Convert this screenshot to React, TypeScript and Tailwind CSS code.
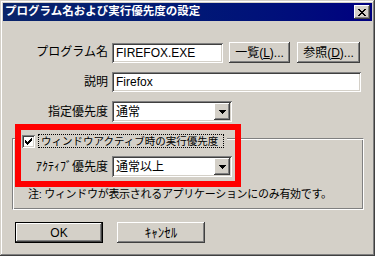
import React from "react";

const raised =
  "shadow-[inset_-1px_-1px_#404040,inset_1px_1px_#ffffff,inset_-2px_-2px_#808080,inset_2px_2px_#d4d0c8]";
const sunken =
  "shadow-[inset_1px_1px_#808080,inset_-1px_-1px_#ffffff,inset_2px_2px_#404040,inset_-2px_-2px_#d4d0c8]";

function Arrow() {
  return (
    <svg width="7" height="4" viewBox="0 0 7 4" shapeRendering="crispEdges">
      <path d="M0 0h7v1H0zM1 1h5v1H1zM2 2h3v1H2zM3 3h1v1H3z" fill="#000" />
    </svg>
  );
}

function Combo({ text }: { text: string }) {
  return (
    <div className={`flex h-[21px] w-[120px] items-center bg-white p-[2px] ${sunken}`}>
      <span className="flex-1 pl-[2px] text-[12px] leading-none text-black">{text}</span>
      <span className={`flex h-[17px] w-[16px] items-center justify-center bg-[#d4d0c8] ${raised}`}>
        <Arrow />
      </span>
    </div>
  );
}

function Edit({ text, w }: { text: string; w: string }) {
  return (
    <div className={`flex h-[20px] items-center bg-white pl-[4px] text-[12px] leading-none text-black ${w} ${sunken}`}>
      {text}
    </div>
  );
}

export default function App() {
  return (
    <div className="font-['Liberation_Sans','Noto_Sans_CJK_JP',sans-serif] text-black">
      <div className="relative h-[256px] w-[375px] bg-[#d4d0c8] p-[3px] shadow-[inset_-1px_-1px_#404040,inset_1px_1px_#d4d0c8,inset_-2px_-2px_#808080,inset_2px_2px_#ffffff]">
        {/* Title bar */}
        <div className="flex h-[18px] items-center justify-between bg-linear-to-r from-[#0a246a] to-[#000080] pl-[2px] pr-[2px]">
          <span className="whitespace-nowrap text-[11.5px] font-bold leading-none text-white">
            プログラム名および実行優先度の設定
          </span>
          <div className={`flex h-[14px] w-[16px] items-center justify-center bg-[#d4d0c8] ${raised}`}>
            <svg width="8" height="7" viewBox="0 0 8 7" shapeRendering="crispEdges">
              <path
                d="M0 0h2v1H0zM6 0h2v1H6zM1 1h2v1H1zM5 1h2v1H5zM2 2h4v1H2zM3 3h2v1H3zM2 4h4v1H2zM1 5h2v1H1zM5 5h2v1H5zM0 6h2v1H0zM6 6h2v1H6z"
                fill="#000"
              />
            </svg>
          </div>
        </div>

        {/* Row 1 */}
        <div className="mt-[21px] flex h-[21px] items-start">
          <span className="w-[105px] text-right text-[12px] leading-[21px]">プログラム名</span>
          <div className="ml-[4px] mt-[1px]">
            <Edit text="FIREFOX.EXE" w="w-[111px]" />
          </div>
          <button className={`ml-[6px] flex h-[21px] w-[61px] items-center justify-center bg-[#d4d0c8] text-[12px] leading-none ${raised}`}>
            一覧(<u>L</u>)...
          </button>
          <button className={`ml-[7px] flex h-[21px] w-[63px] items-center justify-center bg-[#d4d0c8] text-[12px] leading-none ${raised}`}>
            参照(<u>D</u>)...
          </button>
        </div>

        {/* Row 2 */}
        <div className="mt-[9px] flex h-[20px] items-center">
          <span className="w-[105px] text-right text-[12px] leading-none">説明</span>
          <div className="ml-[4px]">
            <Edit text="Firefox" w="w-[249px]" />
          </div>
        </div>

        {/* Row 3 */}
        <div className="mt-[9px] flex h-[21px] items-center">
          <span className="w-[105px] text-right text-[12px] leading-none">指定優先度</span>
          <div className="ml-[4px]">
            <Combo text="通常" />
          </div>
        </div>

        {/* Group box */}
        <div className="relative ml-[9px] mt-[16px] h-[72px] w-[352px] border border-b-white border-l-[#808080] border-r-white border-t-[#808080] shadow-[inset_1px_1px_#ffffff,inset_-1px_-1px_#808080]">
          <div className="absolute left-[7px] top-[-5px] flex h-[14px] items-center bg-[#d4d0c8] pl-[2px] pr-[3px]">
            <div className={`flex h-[13px] w-[13px] items-center justify-center bg-white ${sunken}`}>
              <svg width="7" height="7" viewBox="0 0 7 7" shapeRendering="crispEdges">
                <path
                  d="M6 0h1v1H6zM5 1h2v1H5zM0 2h1v1H0zM4 2h3v1H4zM0 3h2v1H0zM3 3h3v1H3zM0 4h5v1H0zM1 5h3v1H1zM2 6h1v1H2z"
                  fill="#000"
                />
              </svg>
            </div>
            <span className="ml-[3px] flex h-[14px] w-[186px] items-center whitespace-nowrap border border-dotted border-black pl-[2px] text-[10.5px] leading-none">
              ウィンドウアクティブ時の実行優先度
            </span>
          </div>

          <div className="mt-[17px] flex h-[21px] items-center">
            <span className="w-[95px] text-right text-[12px] leading-none">ｱｸﾃｨﾌﾞ優先度</span>
            <div className="ml-[4px]">
              <Combo text="通常以上" />
            </div>
          </div>
          <div className="ml-[15px] mt-[12px] whitespace-nowrap text-[11px] leading-none tracking-[-0.3px]">
            注: ウィンドウが表示されるアプリケーションにのみ有効です。
          </div>
        </div>

        {/* Buttons */}
        <div className="mt-[12px] flex">
          <div className="ml-[12px] h-[21px] w-[88px] border border-black">
            <button className={`flex h-full w-full items-center justify-center bg-[#d4d0c8] text-[12px] leading-none ${raised}`}>
              OK
            </button>
          </div>
          <button className={`ml-[14px] flex h-[21px] w-[88px] items-center justify-center bg-[#d4d0c8] text-[13px] leading-none ${raised}`}>
            ｷｬﾝｾﾙ
          </button>
        </div>

        {/* Red annotation rectangle */}
        <div className="pointer-events-none absolute left-[15px] top-[124px] h-[63px] w-[226px] border-[6px] border-[#ff0000]" />
      </div>
    </div>
  );
}
